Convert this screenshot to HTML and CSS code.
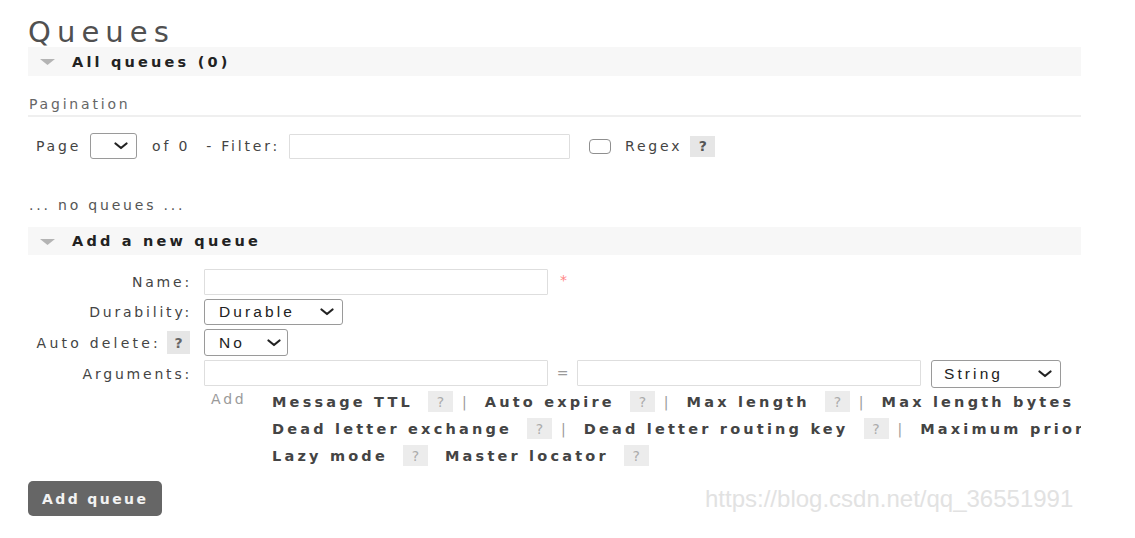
FILE: index.html
```html
<!DOCTYPE html>
<html lang="en">
<head>
<meta charset="utf-8">
<title>Queues</title>
<link rel="stylesheet" href="styles.css">
</head>
<body>
<div class="page">
  <h1 class="title">Queues</h1>

  <div class="section-head">
    <svg class="tri" width="15" height="6" viewBox="0 0 15 6"><polygon points="0,0 15,0 7.5,6" fill="#b4b4b4"/></svg>
    <span class="section-text">All queues (0)</span>
  </div>

  <h3 class="subhead">Pagination</h3>

  <div class="pager">
    <span class="txt page-lbl">Page</span>
    <div class="select sel-page">
      <svg class="chev" width="14" height="8" viewBox="0 0 14 8"><path d="M1.5 1.5 L7 6 L12.5 1.5" fill="none" stroke="#222" stroke-width="2.2" stroke-linecap="round" stroke-linejoin="round"/></svg>
    </div>
    <span class="txt of-lbl">of 0</span>
    <span class="txt filter-lbl">- Filter:</span>
    <input class="input filter-input" type="text">
    <input class="checkbox" type="checkbox">
    <span class="txt regex-lbl">Regex</span>
    <span class="help">?</span>
  </div>

  <p class="empty">... no queues ...</p>

  <div class="section-head second">
    <svg class="tri" width="15" height="6" viewBox="0 0 15 6"><polygon points="0,0 15,0 7.5,6" fill="#b4b4b4"/></svg>
    <span class="section-text">Add a new queue</span>
  </div>

  <div class="form">
    <div class="row row-name">
      <div class="label">Name:</div>
      <div class="ctrl">
        <input class="input wide" type="text">
        <span class="req">*</span>
      </div>
    </div>
    <div class="row row-durability">
      <div class="label">Durability:</div>
      <div class="ctrl">
        <div class="select sel-durable">
          <span class="sel-text">Durable</span>
          <svg class="chev" width="14" height="8" viewBox="0 0 14 8"><path d="M1.5 1.5 L7 6 L12.5 1.5" fill="none" stroke="#222" stroke-width="2.2" stroke-linecap="round" stroke-linejoin="round"/></svg>
        </div>
      </div>
    </div>
    <div class="row row-auto">
      <div class="label"><span class="auto-lbl">Auto delete:</span><span class="help help-label">?</span></div>
      <div class="ctrl">
        <div class="select sel-no">
          <span class="sel-text">No</span>
          <svg class="chev" width="14" height="8" viewBox="0 0 14 8"><path d="M1.5 1.5 L7 6 L12.5 1.5" fill="none" stroke="#222" stroke-width="2.2" stroke-linecap="round" stroke-linejoin="round"/></svg>
        </div>
      </div>
    </div>
    <div class="row row-args">
      <div class="label">Arguments:</div>
      <div class="ctrl ctrl-top">
        <input class="input wide" type="text">
        <span class="eq">=</span>
        <input class="input wide" type="text">
        <div class="select sel-string">
          <span class="sel-text">String</span>
          <svg class="chev" width="14" height="8" viewBox="0 0 14 8"><path d="M1.5 1.5 L7 6 L12.5 1.5" fill="none" stroke="#222" stroke-width="2.2" stroke-linecap="round" stroke-linejoin="round"/></svg>
        </div>
      </div>
    </div>
    <div class="row row-help">
      <div class="label"></div>
      <div class="ctrl ctrl-top">
        <span class="add">Add</span>
        <div class="links">
          <div class="link-row">
            <span class="link">Message TTL</span><span class="help help-light">?</span><span class="sep">|</span>
            <span class="link">Auto expire</span><span class="help help-light">?</span><span class="sep">|</span>
            <span class="link">Max length</span><span class="help help-light">?</span><span class="sep">|</span>
            <span class="link">Max length bytes</span>
          </div>
          <div class="link-row">
            <span class="link">Dead letter exchange</span><span class="help help-light">?</span><span class="sep">|</span>
            <span class="link">Dead letter routing key</span><span class="help help-light">?</span><span class="sep">|</span>
            <span class="link">Maximum priority</span>
          </div>
          <div class="link-row">
            <span class="link">Lazy mode</span><span class="help help-light">?</span>
            <span class="link">Master locator</span><span class="help help-light">?</span>
          </div>
        </div>
      </div>
    </div>
  </div>

  <button class="btn" type="button">Add queue</button>
</div>
<div class="watermark">https://blog.csdn.net/qq_36551991</div>
</body>
</html>
```

FILE: styles.css
```css
* { box-sizing: border-box; }

html, body {
  margin: 0;
  padding: 0;
  background: #ffffff;
}

body {
  font-family: "DejaVu Sans", Verdana, sans-serif;
  font-size: 14px;
  color: #444;
  position: relative;
  width: 1135px;
  height: 538px;
  overflow: hidden;
}

.page {
  margin-left: 28px;
  width: 1053px;
}

.title {
  margin: 18px 0 0 0;
  height: 29px;
  font-size: 29px;
  line-height: 29px;
  font-weight: normal;
  color: #505050;
  letter-spacing: 0.21em;
}

.section-head {
  display: flex;
  align-items: center;
  height: 29px;
  background: #f7f7f7;
  padding-left: 12px;
}

.section-head.second {
  margin-top: 12px;
  height: 28px;
}

.tri {
  display: block;
  margin-right: 17px;
  margin-top: 1px;
}

.section-text {
  font-weight: bold;
  font-size: 14.5px;
  letter-spacing: 0.22em;
  color: #222;
  line-height: 20px;
}

.subhead {
  margin: 18px 0 0 0;
  font-size: 14px;
  line-height: 20px;
  height: 23px;
  font-weight: normal;
  color: #666;
  letter-spacing: 0.2em;
  padding-left: 1px;
  border-bottom: 2px solid #efefef;
}

.input {
  display: block;
  margin: 0;
  padding: 0 4px;
  height: 26px;
  border: 1px solid #dedede;
  border-radius: 1px;
  background: #fff;
  font-family: "DejaVu Sans", Verdana, sans-serif;
  font-size: 14px;
  outline: none;
}

.wide { width: 344px; }

.checkbox {
  -webkit-appearance: none;
  appearance: none;
  display: block;
  width: 22px;
  height: 15px;
  margin: 0;
  border: 1.5px solid #8f8f8f;
  border-radius: 4px;
  background: #fff;
}

.pager {
  display: flex;
  align-items: center;
  margin-top: 16px;
  height: 26px;
  padding-left: 8px;
}

.txt {
  font-size: 14px;
  letter-spacing: 0.2em;
  color: #444;
  line-height: 20px;
}

.pager .sel-page { margin-left: 9px; width: 47px; justify-content: flex-end; }
.pager .of-lbl { margin-left: 15px; }
.pager .filter-lbl { margin-left: 16px; }
.pager .filter-input { margin-left: 9px; width: 281px; height: 25px; }
.pager .checkbox { margin-left: 19px; }
.pager .regex-lbl { margin-left: 14px; }
.pager .help { margin-left: 8px; }

.select {
  display: flex;
  align-items: center;
  justify-content: space-between;
  height: 26px;
  padding: 0 8px 0 14px;
  border: 1px solid #9a9a9a;
  border-radius: 3px;
  background: #fff;
}

.sel-text {
  font-family: "Liberation Sans", Arial, sans-serif;
  font-size: 15.5px;
  letter-spacing: 0.2em;
  color: #222;
  line-height: 20px;
}

.chev { display: block; flex: none; }

.sel-durable { width: 139px; }
.sel-no { width: 84px; height: 27px; padding-right: 6px; }
.sel-string { width: 130px; height: 28px; margin-left: 10px; padding-left: 12px; }

.help {
  display: flex;
  flex: none;
  align-items: center;
  justify-content: center;
  width: 25px;
  height: 21px;
  background: #e6e6e6;
  color: #555;
  font-weight: bold;
  font-size: 14px;
  line-height: 20px;
  letter-spacing: 0;
}

.help-label {
  width: 23px;
  height: 23px;
  margin-left: 6px;
  margin-right: 2px;
  color: #666;
}

.auto-lbl { letter-spacing: 0.23em; }

.help-light {
  background: #ececec;
  color: #ababab;
  font-weight: normal;
  margin-left: 15px;
}

.empty {
  margin: 36px 0 0 0;
  padding-left: 1px;
  font-size: 14px;
  line-height: 20px;
  color: #555;
  letter-spacing: 0.2em;
}

.form {
  margin-top: 14px;
}

.row {
  display: flex;
  align-items: center;
  margin-top: 4px;
}

.row-name { margin-top: 0; height: 26px; }
.row-durability { height: 26px; }
.row-auto { height: 27px; }
.row-args { height: 28px; }
.row-help { margin-top: 0; height: 81px; align-items: flex-start; }

.label {
  width: 164px;
  flex: none;
  display: flex;
  align-items: center;
  justify-content: flex-end;
  font-size: 14px;
  letter-spacing: 0.2em;
  color: #444;
  line-height: 20px;
  white-space: nowrap;
}

.ctrl {
  margin-left: 12px;
  display: flex;
  align-items: center;
}

.ctrl-top { align-items: flex-start; }

.req {
  align-self: flex-start;
  margin-top: 1px;
  margin-left: 12px;
  color: #ff8585;
  font-size: 14px;
  line-height: 20px;
}

.eq {
  width: 29px;
  text-align: center;
  color: #9a9a9a;
  font-size: 14px;
  line-height: 26px;
}

.add {
  width: 68px;
  flex: none;
  padding-left: 7px;
  font-size: 14px;
  line-height: 22px;
  letter-spacing: 0.2em;
  color: #9a9a9a;
}

.links {
  width: 809px;
  overflow: hidden;
}

.link-row {
  display: flex;
  align-items: center;
  height: 27px;
  white-space: nowrap;
}

.link-row > * { flex: none; }

.link {
  font-weight: bold;
  font-size: 14.5px;
  letter-spacing: 0.22em;
  color: #444;
  line-height: 20px;
}

.link-row .help + .link { margin-left: 17px; }

.sep {
  margin-left: 9px;
  margin-right: 18px;
  color: #9a9a9a;
  font-size: 14px;
  line-height: 20px;
}

.btn {
  display: block;
  margin: 12px 0 0 0;
  width: 134px;
  height: 35px;
  padding: 0 0 0 14px;
  text-align: left;
  border: none;
  border-radius: 5px;
  background: #666666;
  color: #f2f2f2;
  font-family: "DejaVu Sans", Verdana, sans-serif;
  font-weight: bold;
  font-size: 14px;
  letter-spacing: 2.4px;
}

.watermark {
  position: absolute;
  left: 705px;
  top: 487px;
  font-family: "Liberation Sans", Arial, sans-serif;
  font-size: 24px;
  line-height: 24px;
  color: #e2e2e2;
  white-space: nowrap;
}
```
